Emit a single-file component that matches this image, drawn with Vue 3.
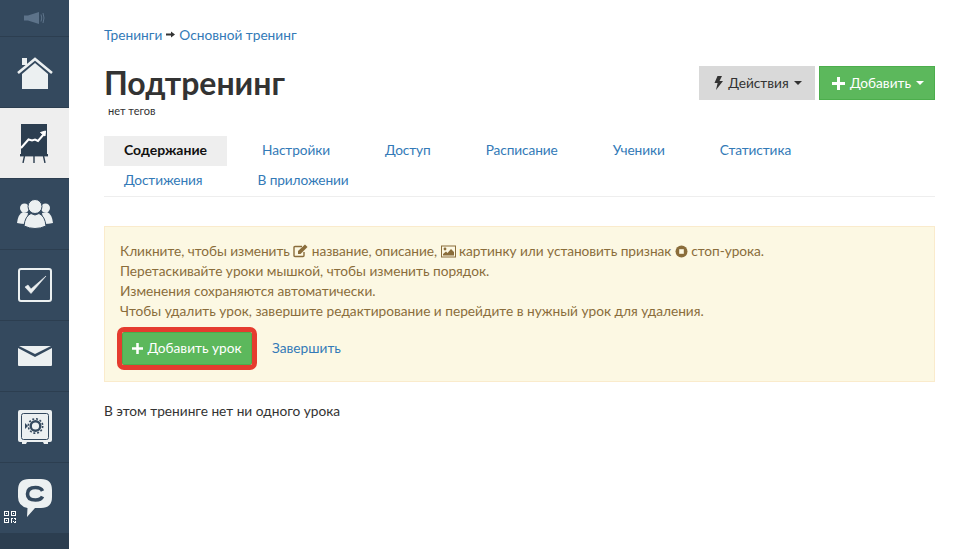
<template>
  <div class="page">
    <aside class="sidebar">
      <div class="side-top">
        <svg width="21" height="12" viewBox="0 0 21 12">
          <rect x="0" y="3.5" width="4" height="5" fill="#5d738a" />
          <path d="M4 3.5 L15 0 V12 L4 8.5Z" fill="#5d738a" />
          <path d="M17 2.5 Q18.5 6 17 9.5 M19 1 Q21 6 19 11" fill="none" stroke="#5d738a" stroke-width="1" />
        </svg>
      </div>
      <div class="side-item">
        <svg width="36" height="33" viewBox="0 0 36 33">
          <rect x="5" y="2" width="5" height="7" fill="#ecf0f1" />
          <path d="M5 18 L18 7 L31 18 V33 H5Z" fill="#ecf0f1" />
          <path d="M1 17 L18 3 L35 17" fill="none" stroke="#ecf0f1" stroke-width="2.6" />
        </svg>
      </div>
      <div class="side-item active">
        <svg width="29" height="39" viewBox="0 0 29 39">
          <rect x="1" y="0" width="26" height="30" fill="#2c3e50" />
          <rect x="0" y="30" width="28" height="2.4" fill="#2c3e50" />
          <path d="M4.5 32 L3 39 M14 32 V39 M23.5 32 L25 39" stroke="#2c3e50" stroke-width="1.4" fill="none" />
          <path d="M1 24 L8.5 15.5 L12 16.5 L15 15.5 L18 17 L24 10" fill="none" stroke="#fff" stroke-width="2" />
          <path d="M20.5 8.5 L25.5 7 L25 12Z" fill="#fff" stroke="#fff" stroke-width="1" />
        </svg>
      </div>
      <div class="side-item">
        <svg width="36" height="31" viewBox="0 0 36 31">
          <circle cx="7.5" cy="9" r="4.5" fill="#ecf0f1" />
          <circle cx="28.5" cy="9" r="4.5" fill="#ecf0f1" />
          <path d="M0 24 Q1 15 6 13 L11 14 L9 25 Q4 25 0 24Z" fill="#ecf0f1" />
          <path d="M36 24 Q35 15 30 13 L25 14 L27 25 Q32 25 36 24Z" fill="#ecf0f1" />
          <circle cx="18" cy="7.5" r="7" fill="#ecf0f1" stroke="#34495e" stroke-width="1" />
          <path d="M7 27 Q8 17 14 14.5 L18 16 L22 14.5 Q28 17 29 27 Q18 32 7 27Z" fill="#ecf0f1" stroke="#34495e" stroke-width="1" />
        </svg>
      </div>
      <div class="side-item">
        <svg width="34" height="34" viewBox="0 0 34 34">
          <rect x="1" y="1" width="32" height="32" rx="2" fill="none" stroke="#ecf0f1" stroke-width="2" />
          <path d="M7 19 L13 25.5 L28 8 L13 21 L10 17Z" fill="#ecf0f1" stroke="#ecf0f1" stroke-width="0.6" />
        </svg>
      </div>
      <div class="side-item">
        <svg width="34" height="20" viewBox="0 0 34 20">
          <path d="M0 2 L17 11 L34 2 V19 Q34 20 33 20 H1 Q0 20 0 19Z" fill="#ecf0f1" />
          <path d="M1 0 H33 L17 8Z" fill="#ecf0f1" />
        </svg>
      </div>
      <div class="side-item">
        <svg width="34" height="34" viewBox="0 0 34 34">
          <path d="M2 0 H32 Q34 0 34 2 V30 Q34 32 32 32 H30 V34 H26 L25 32 H9 L8 34 H4 V32 H2 Q0 32 0 30 V2 Q0 0 2 0Z" fill="#ecf0f1" />
          <rect x="3.5" y="3.5" width="27" height="26" rx="2" fill="none" stroke="#34495e" stroke-width="1" />
          <circle cx="17.5" cy="16" r="4.8" fill="none" stroke="#34495e" stroke-width="2.4" />
          <circle cx="17.5" cy="16" r="7.2" fill="none" stroke="#34495e" stroke-width="1.6" stroke-dasharray="2 1.8" />
          <path d="M7 13 L10 16 L7 19Z" fill="#34495e" />
        </svg>
      </div>
      <div class="side-item">
        <svg width="34" height="38" viewBox="0 0 34 38">
          <path d="M11 0 H23 Q34 0 34 11 V18 Q34 29 23 29 H17 L9 38 L9.5 29 Q0 27 0 18 V11 Q0 0 11 0Z" fill="#ecf0f1" />
          <path d="M24.5 12 Q23 8.5 17.5 8.5 Q9.5 8.5 9.5 15 Q9.5 21 17.5 21 Q23 21 24.5 17.5" fill="none" stroke="#34495e" stroke-width="3.6" />
        </svg>
      </div>
      <svg class="qr" width="12" height="12" viewBox="0 0 12 12">
        <path d="M0 0 H5 V5 H0Z M1 1 V4 H4 V1Z M7 0 H12 V5 H7Z M8 1 V4 H11 V1Z M0 7 H5 V12 H0Z M1 8 V11 H4 V8Z" fill="#fff" fill-rule="evenodd" />
        <path d="M2 2 H3 V3 H2Z M9 2 H10 V3 H9Z M2 9 H3 V10 H2Z M7 7 H9 V8 H8 V12 H7Z M10 7 H12 V9 H11 V8 H10Z M9 10 H10 V11 H9Z M11 10 H12 V12 H10 V11 H11Z" fill="#fff" />
      </svg>
      <div class="side-bottom"></div>
    </aside>

    <main class="content">
      <div class="breadcrumbs">
        <a>Тренинги</a>
        <svg class="crumb-arrow" width="9" height="7" viewBox="0 0 9 7"><path d="M0 2.5 H5 V0.5 L9 3.5 L5 6.5 V4.5 H0Z" fill="#333" /></svg>
        <a>Основной тренинг</a>
      </div>

      <div class="head">
        <div>
          <h1>Подтренинг</h1>
          <div class="tags">нет тегов</div>
        </div>
        <div class="head-btns">
          <button class="btn btn-gray">
            <svg width="9" height="14" viewBox="0 0 9 14"><path d="M3.5 0 H8 L5.5 5 H9 L2 14 L3.6 7 H0.5Z" fill="#333" /></svg>
            <span class="btn-label">Действия</span>
            <span class="caret"></span>
          </button>
          <button class="btn btn-green">
            <svg width="13" height="13" viewBox="0 0 13 13"><path d="M5 0 H8 V5 H13 V8 H8 V13 H5 V8 H0 V5 H5Z" fill="#fff" /></svg>
            <span class="btn-label">Добавить</span>
            <span class="caret"></span>
          </button>
        </div>
      </div>

      <ul class="tabs">
        <li v-for="(tab, i) in tabs" :key="tab" :class="{ current: i === 0 }">{{ tab }}</li>
      </ul>

      <div class="notice">
        <p class="first-line">
          Кликните, чтобы изменить
          <svg class="inl" width="15" height="14" viewBox="0 0 15 14">
            <path d="M11 8 V11.5 Q11 12.5 10 12.5 H2 Q1 12.5 1 11.5 V3.5 Q1 2.5 2 2.5 H9" fill="none" stroke="#8a6d3b" stroke-width="1.4" />
            <path d="M5 7 L12 0.5 L14.5 3 L7.5 10 L5 10Z" fill="#8a6d3b" />
          </svg>
          название, описание,
          <svg class="inl" width="15" height="13" viewBox="0 0 15 13">
            <rect x="0.5" y="1" width="14" height="11" fill="#fcf8e3" stroke="#8a6d3b" />
            <circle cx="4" cy="4" r="1.4" fill="#8a6d3b" />
            <path d="M2 10.5 V9 L5 6.5 L6.5 8 L10 4 L13 7 V10.5Z" fill="#8a6d3b" />
          </svg>
          картинку или установить признак
          <svg class="inl" width="13" height="13" viewBox="0 0 13 13">
            <circle cx="6.5" cy="6.5" r="6" fill="#8a6d3b" />
            <rect x="4.2" y="4.2" width="4.6" height="4.6" fill="#fcf8e3" />
          </svg>
          стоп-урока.
        </p>
        <p>Перетаскивайте уроки мышкой, чтобы изменить порядок.</p>
        <p>Изменения сохраняются автоматически.</p>
        <p>Чтобы удалить урок, завершите редактирование и перейдите в нужный урок для удаления.</p>
        <div class="notice-actions">
          <button class="btn btn-green btn-lesson">
            <svg width="11" height="11" viewBox="0 0 13 13"><path d="M5 0 H8 V5 H13 V8 H8 V13 H5 V8 H0 V5 H5Z" fill="#fff" /></svg>
            <span class="btn-label">Добавить урок</span>
          </button>
          <a class="finish">Завершить</a>
        </div>
      </div>

      <p class="empty">В этом тренинге нет ни одного урока</p>
    </main>
  </div>
</template>

<script setup>
const tabs = ["Содержание", "Настройки", "Доступ", "Расписание", "Ученики", "Статистика", "Достижения", "В приложении"];
</script>

<style>
body {
  margin: 0;
  background: #fff;
}
</style>

<style scoped>
.page {
  display: flex;
  height: 549px;
  overflow: hidden;
  font-family: "Lato", "Open Sans", sans-serif;
  font-size: 13.7px;
  color: #333;
}

.sidebar {
  position: relative;
  flex: 0 0 69px;
  display: flex;
  flex-direction: column;
  background: #34495e;
}

.side-top {
  height: 36px;
  display: flex;
  align-items: center;
  justify-content: center;
  border-bottom: 1px solid #2c3e50;
}

.side-item {
  height: 70px;
  display: flex;
  align-items: center;
  justify-content: center;
  border-bottom: 1px solid #2c3e50;
}

.side-item.active {
  background: #eee;
}

.side-bottom {
  flex: 1;
  background: #2c3e50;
}

.qr {
  position: absolute;
  left: 4px;
  top: 511px;
}

.content {
  flex: 1;
  padding: 26px 30px 0 35px;
}

a {
  color: #337ab7;
}

.breadcrumbs {
  display: flex;
  align-items: center;
  gap: 4px;
  height: 17px;
}

.head {
  display: flex;
  justify-content: space-between;
  margin-top: 23px;
}

h1 {
  margin: 0;
  font-size: 32px;
  line-height: 34px;
  font-weight: 700;
}

.tags {
  margin: 4px 0 0 4px;
  font-size: 11px;
  line-height: 14px;
}

.head-btns {
  display: flex;
  gap: 4px;
}

.btn {
  display: flex;
  align-items: center;
  justify-content: center;
  gap: 4px;
  width: 116px;
  height: 34px;
  padding: 0;
  border: 1px solid transparent;
  font: inherit;
}

.head-btns .btn {
  gap: 5px;
  padding-left: 2px;
}

.btn-label {
  position: relative;
  top: -1px;
}

.btn-gray {
  background: #d9d9d9;
  color: #333;
}

.btn-green {
  background: #5cb85c;
  border-color: #4cae4c;
  color: #fff;
}

.caret {
  width: 0;
  height: 0;
  border-top: 4px solid currentColor;
  border-left: 4px solid transparent;
  border-right: 4px solid transparent;
}

.tabs {
  display: flex;
  flex-wrap: wrap;
  margin: 18px 0 0;
  padding: 0;
  list-style: none;
  border-bottom: 1px solid #eee;
}

.tabs li {
  height: 30px;
  line-height: 28px;
  padding: 0 20px;
  margin-right: 15px;
  color: #337ab7;
  letter-spacing: -0.1px;
}

.tabs li.current {
  background: #eee;
  color: #111;
  font-size: 14px;
  font-weight: 700;
  letter-spacing: 0;
}

.notice {
  margin-top: 29px;
  height: 156px;
  box-sizing: border-box;
  padding: 14px 15px 0;
  background: #fcf8e3;
  border: 1px solid #faebcc;
  color: #8a6d3b;
}

.notice p {
  margin: 0;
  line-height: 20px;
}

.notice .first-line {
  letter-spacing: -0.05px;
}

.inl {
  vertical-align: -2px;
}

.notice-actions {
  display: flex;
  align-items: center;
  gap: 15px;
  margin: 6px 0 0 -3px;
}

.btn-lesson {
  width: 130px;
  height: 33px;
  border-radius: 2px;
  outline: 5px solid #e53c2f;
  outline-offset: 0;
  margin: 5px;
}

.finish {
  position: relative;
  top: -1px;
}

.empty {
  margin: 20px 0 0;
}
</style>
